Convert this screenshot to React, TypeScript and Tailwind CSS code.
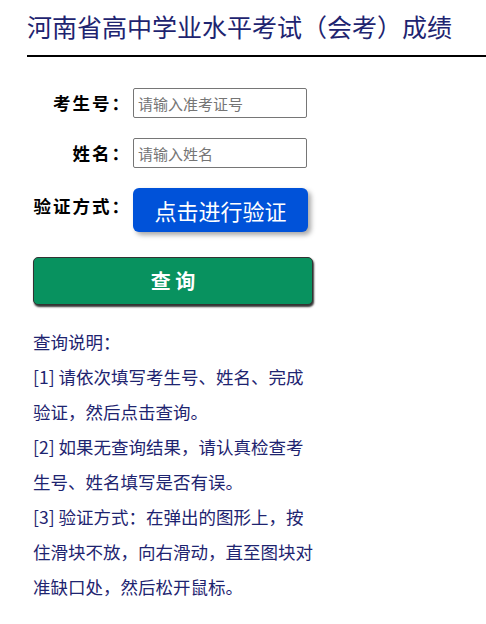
import React from "react";

const font = { fontFamily: '"Noto Sans CJK SC", "Noto Sans", sans-serif' };

export default function App() {
  return (
    <div className="w-[486px] min-h-[624px] bg-white text-[#1e2470]" style={font}>
      <div className="pl-[27px] pt-[8px]">
        <h1 className="text-[25px] leading-[36px] font-normal text-[#1e2470]">
          河南省高中学业水平考试（会考）成绩
        </h1>
        <div className="mt-[11px] h-[2px] bg-black" />
      </div>

      <div className="pl-[33px] pt-[31px] flex flex-col gap-[20px]">
        <div className="flex items-center gap-[2px]">
          <label className="w-[98px] text-right text-[17.5px] tracking-[2px] font-bold text-black">考生号：</label>
          <input
            className="w-[174px] h-[30px] border border-[#767676] rounded-[2px] px-[4px] text-[15px] placeholder:text-[#757575] outline-none"
            placeholder="请输入准考证号"
          />
        </div>
        <div className="flex items-center gap-[2px]">
          <label className="w-[98px] text-right text-[17.5px] tracking-[2px] font-bold text-black">姓名：</label>
          <input
            className="w-[174px] h-[30px] border border-[#767676] rounded-[2px] px-[4px] text-[15px] placeholder:text-[#757575] outline-none"
            placeholder="请输入姓名"
          />
        </div>
        <div className="flex items-start gap-[2px]">
          <label className="w-[98px] pt-[5px] text-right text-[17.5px] tracking-[2px] font-bold text-black">验证方式：</label>
          <button className="w-[175px] h-[44px] rounded-[6px] bg-[#0052d9] text-white text-[22px] shadow-[3px_3px_5px_rgba(0,0,0,0.35)]">
            点击进行验证
          </button>
        </div>
      </div>

      <div className="pl-[33px] pt-[25px]">
        <button className="w-[280px] h-[48px] rounded-[5px] bg-[#08925f] border border-[#333] text-white text-[20px] font-bold shadow-[1px_2px_2px_rgba(0,0,0,0.8)]">
          查 询
        </button>
      </div>

      <div className="pl-[33px] pt-[19px] w-[314px] text-[17.5px] leading-[35px] text-[#1e2470]">
        <p>查询说明：</p>
        <p>[1] 请依次填写考生号、姓名、完成验证，然后点击查询。</p>
        <p>[2] 如果无查询结果，请认真检查考生号、姓名填写是否有误。</p>
        <p>[3] 验证方式：在弹出的图形上，按住滑块不放，向右滑动，直至图块对准缺口处，然后松开鼠标。</p>
      </div>
    </div>
  );
}
